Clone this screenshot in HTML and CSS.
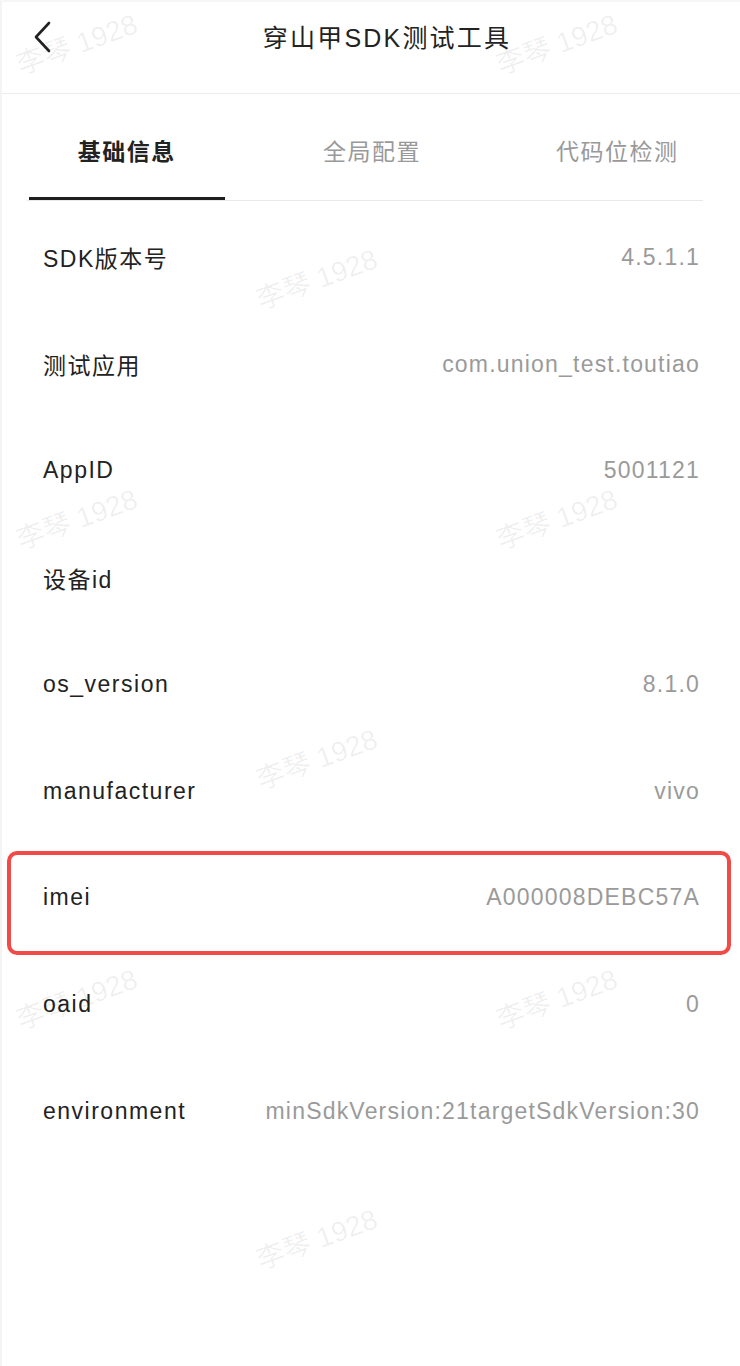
FILE: index.html
```html
<!DOCTYPE html>
<html lang="zh-CN">
<head>
<meta charset="utf-8">
<title>穿山甲SDK测试工具</title>
<link rel="stylesheet" href="styles.css">
</head>
<body>
<div class="page">
  <header class="header">
    <div class="header-row">
      <svg class="back" width="20" height="32" viewBox="0 0 20 32"><path d="M16 2 L3 16 L16 30" fill="none" stroke="#222" stroke-width="2.6" stroke-linecap="round" stroke-linejoin="round"/></svg>
      <h1 class="title">穿山甲SDK测试工具</h1>
    </div>
  </header>
  <nav class="tabs">
    <div class="tab active"><span class="tab-text">基础信息</span><span class="indicator"></span></div>
    <div class="tab"><span class="tab-text">全局配置</span><span class="indicator"></span></div>
    <div class="tab"><span class="tab-text">代码位检测</span><span class="indicator"></span></div>
  </nav>
  <div class="tab-line"></div>
  <ul class="list">
    <li class="row"><span class="label">SDK版本号</span><span class="value">4.5.1.1</span></li>
    <li class="row"><span class="label">测试应用</span><span class="value">com.union_test.toutiao</span></li>
    <li class="row"><span class="label">AppID</span><span class="value">5001121</span></li>
    <li class="row"><span class="label">设备id</span><span class="value"></span></li>
    <li class="row"><span class="label">os_version</span><span class="value">8.1.0</span></li>
    <li class="row"><span class="label">manufacturer</span><span class="value">vivo</span></li>
    <li class="row"><span class="label">imei</span><span class="value">A000008DEBC57A</span></li>
    <li class="row"><span class="label">oaid</span><span class="value">0</span></li>
    <li class="row"><span class="label">environment</span><span class="value">minSdkVersion:21targetSdkVersion:30</span></li>
  </ul>
  <div class="highlight"></div>
  <div class="watermarks">
    <span class="wm wm1">李琴 1928</span>
    <span class="wm wm2">李琴 1928</span>
    <span class="wm wm3">李琴 1928</span>
    <span class="wm wm4">李琴 1928</span>
    <span class="wm wm5">李琴 1928</span>
    <span class="wm wm6">李琴 1928</span>
    <span class="wm wm7">李琴 1928</span>
    <span class="wm wm8">李琴 1928</span>
    <span class="wm wm9">李琴 1928</span>
  </div>
</div>
</body>
</html>
```
FILE: styles.css
```css
* { box-sizing: border-box; }
html, body {
  margin: 0;
  padding: 0;
  background: #fff;
}
body {
  font-family: "Liberation Sans", "Noto Sans CJK SC", sans-serif;
  color: #222;
}
.page {
  position: relative;
  width: 740px;
  height: 1366px;
  overflow: hidden;
  background: #fff;
  border-left: 2px solid #f4f4f4;
  border-top: 2px solid #f6f6f6;
}
.header {
  height: 92px;
  border-bottom: 1px solid #ececec;
}
.header-row {
  position: relative;
  height: 68px;
  display: flex;
  align-items: center;
  justify-content: center;
  padding-left: 32px;
}
.back {
  position: absolute;
  left: 31px;
  top: 19px;
}
.title {
  margin: 0;
  font-size: 25px;
  font-weight: normal;
  letter-spacing: 2.2px;
  color: #222;
}
.tabs {
  display: flex;
  padding-left: 2px;
}
.tab {
  flex: 1;
  height: 106px;
  padding-top: 8px;
  display: flex;
  flex-direction: column;
  align-items: center;
}
.tab-text {
  flex: 1;
  display: flex;
  align-items: center;
  font-size: 23px;
  letter-spacing: 1.5px;
  color: #999;
}
.indicator {
  width: 196px;
  height: 3px;
}
.tab.active .tab-text {
  color: #222;
  font-weight: bold;
}
.tab.active .indicator {
  background: #1f1f1f;
}
.tab-line {
  height: 1px;
  margin: 0 37px 0 25px;
  background: #e9e9e9;
}
.list {
  list-style: none;
  margin: 0;
  padding: 3px 0 0 0;
}
.row {
  height: 106.75px;
  display: flex;
  align-items: center;
  justify-content: space-between;
  padding: 0 40px 0 41px;
}
.label {
  font-size: 23px;
  letter-spacing: 1.5px;
  color: #222;
}
.value {
  font-size: 23px;
  letter-spacing: 1.2px;
  color: #9a9a9a;
}
.highlight {
  position: absolute;
  left: 5px;
  top: 849px;
  width: 724px;
  height: 104px;
  border: 4px solid #f24b47;
  border-radius: 10px;
}
.watermarks {
  position: absolute;
  inset: 0;
  pointer-events: none;
}
.wm {
  position: absolute;
  width: 136px;
  height: 32px;
  line-height: 32px;
  text-align: center;
  font-size: 28px;
  white-space: nowrap;
  color: rgba(0, 0, 0, 0.065);
  transform: rotate(-20deg);
}
.wm1 { left: 7px; top: 27px; }
.wm2 { left: 487px; top: 27px; }
.wm3 { left: 247px; top: 262px; }
.wm4 { left: 7px; top: 502px; }
.wm5 { left: 487px; top: 502px; }
.wm6 { left: 247px; top: 742px; }
.wm7 { left: 7px; top: 982px; }
.wm8 { left: 487px; top: 982px; }
.wm9 { left: 247px; top: 1222px; }
```
